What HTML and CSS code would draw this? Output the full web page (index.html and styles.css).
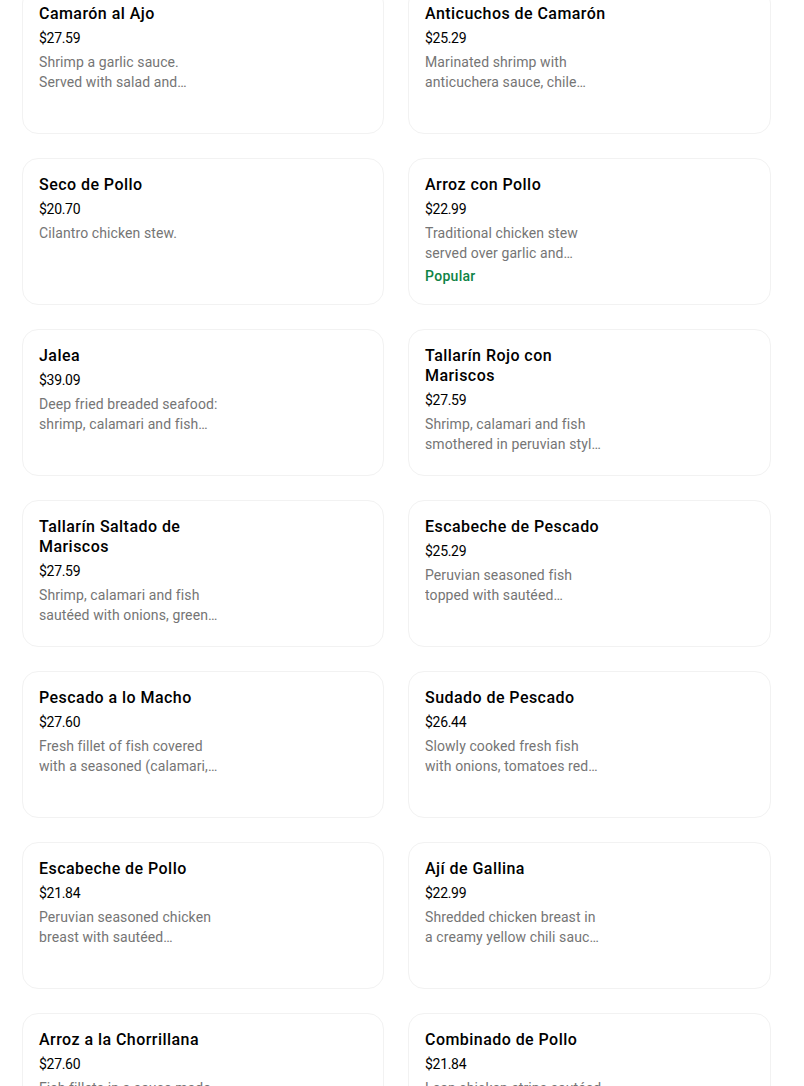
FILE: index.html
```html
<!DOCTYPE html>
<html>
<head>
<meta charset="utf-8">
<link rel="stylesheet" href="styles.css">
</head>
<body>
<div class="grid">
  <div class="card"><div class="info"><div class="title">Camarón al Ajo</div><div class="price">$27.59</div><div class="desc">Shrimp a garlic sauce. Served with salad and steamed white rice.</div></div></div>
  <div class="card"><div class="info"><div class="title">Anticuchos de Camarón</div><div class="price">$25.29</div><div class="desc">Marinated shrimp with anticuchera sauce, chile panca and potatoes.</div></div></div>
  <div class="card"><div class="info"><div class="title">Seco de Pollo</div><div class="price">$20.70</div><div class="desc">Cilantro chicken stew.</div></div></div>
  <div class="card"><div class="info"><div class="title">Arroz con Pollo</div><div class="price">$22.99</div><div class="desc">Traditional chicken stew served over garlic and cilantro rice.</div><div class="badge">Popular</div></div></div>
  <div class="card"><div class="info"><div class="title">Jalea</div><div class="price">$39.09</div><div class="desc">Deep fried breaded seafood: shrimp, calamari and fish topped with onion salsa.</div></div></div>
  <div class="card"><div class="info"><div class="title">Tallarín Rojo con Mariscos</div><div class="price">$27.59</div><div class="desc">Shrimp, calamari and fish smothered in peruvian style red sauce.</div></div></div>
  <div class="card"><div class="info"><div class="title">Tallarín Saltado de Mariscos</div><div class="price">$27.59</div><div class="desc">Shrimp, calamari and fish sautéed with onions, green peppers and tomatoes.</div></div></div>
  <div class="card"><div class="info"><div class="title">Escabeche de Pescado</div><div class="price">$25.29</div><div class="desc">Peruvian seasoned fish topped with sautéed vegetables and peppers.</div></div></div>
  <div class="card"><div class="info"><div class="title">Pescado a lo Macho</div><div class="price">$27.60</div><div class="desc">Fresh fillet of fish covered with a seasoned (calamari, shrimp) sauce.</div></div></div>
  <div class="card"><div class="info"><div class="title">Sudado de Pescado</div><div class="price">$26.44</div><div class="desc">Slowly cooked fresh fish with onions, tomatoes red wine sauce.</div></div></div>
  <div class="card"><div class="info"><div class="title">Escabeche de Pollo</div><div class="price">$21.84</div><div class="desc">Peruvian seasoned chicken breast with sautéed vegetables and peppers.</div></div></div>
  <div class="card"><div class="info"><div class="title">Ají de Gallina</div><div class="price">$22.99</div><div class="desc">Shredded chicken breast in a creamy yellow chili sauce with potatoes.</div></div></div>
  <div class="card"><div class="info"><div class="title">Arroz a la Chorrillana</div><div class="price">$27.60</div><div class="desc">Fish fillets in a sauce made with onions and tomatoes.</div></div></div>
  <div class="card"><div class="info"><div class="title">Combinado de Pollo</div><div class="price">$21.84</div><div class="desc">Lean chicken strips sautéed with onions and tomatoes.</div></div></div>
</div>
</body>
</html>
```
FILE: styles.css
```css
html, body {
  margin: 0;
  padding: 0;
  background: #ffffff;
}
body {
  font-family: Roboto, "Liberation Sans", sans-serif;
  color: #000000;
  overflow: hidden;
}
.grid {
  display: grid;
  grid-template-columns: 362px 363px;
  column-gap: 24px;
  row-gap: 24px;
  padding-left: 22px;
  margin-top: -13px;
}
.card {
  box-sizing: border-box;
  height: 147px;
  border: 1px solid #f2f2f2;
  border-radius: 16px;
  padding: 16px 16px;
}
.info {
  width: 190px;
}
.title {
  font-size: 16px;
  line-height: 20px;
  font-weight: 500;
  letter-spacing: 0.45px;
  color: #000;
}
.price {
  font-size: 14px;
  line-height: 20px;
  margin-top: 4px;
  letter-spacing: -0.3px;
  color: #000;
}
.desc {
  width: 180px;
  font-size: 14px;
  line-height: 20px;
  margin-top: 4px;
  letter-spacing: 0.1px;
  color: #757575;
  display: -webkit-box;
  -webkit-line-clamp: 2;
  -webkit-box-orient: vertical;
  overflow: hidden;
}
.badge {
  font-size: 14px;
  line-height: 20px;
  margin-top: 3px;
  font-weight: 500;
  letter-spacing: 0.3px;
  color: #0e8345;
}
```
